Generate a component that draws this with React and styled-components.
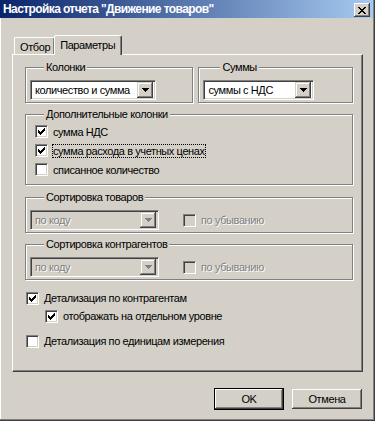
import React from 'react'
import styled, { createGlobalStyle } from 'styled-components'

const GlobalStyle = createGlobalStyle`
  html, body {
    margin: 0;
    padding: 0;
    background: #d4d0c8;
  }
  body {
    font-family: "Liberation Sans", Arial, sans-serif;
    font-size: 11px;
    letter-spacing: -0.4px;
    color: #000;
  }
`

const Window = styled.div`
  width: 375px;
  height: 421px;
  box-sizing: border-box;
  background: #d4d0c8;
  border-right: 1px solid #404040;
  border-bottom: 1px solid #404040;
  box-shadow: inset -1px -1px 0 #808080, inset 1px 0 0 #fff;
  display: flex;
  flex-direction: column;
`

const TitleBar = styled.div`
  height: 18px;
  margin-right: 1px;
  padding: 0 3px 0 3px;
  display: flex;
  align-items: center;
  justify-content: space-between;
  background: linear-gradient(to right, #0a246a, #a6caf0);
`

const Title = styled.span`
  color: #fff;
  font-weight: 700;
  font-size: 12px;
  letter-spacing: -0.6px;
  white-space: nowrap;
`

const CloseButton = styled.div`
  width: 16px;
  height: 14px;
  margin-top: 2px;
  box-sizing: border-box;
  background: #d4d0c8;
  display: flex;
  align-items: center;
  justify-content: center;
  box-shadow: inset -1px -1px 0 #404040, inset 1px 1px 0 #fff, inset -2px -2px 0 #808080;
`

const Body = styled.div`
  flex: 1;
  padding: 17px 0 0 12px;
  display: flex;
  flex-direction: column;
`

const TabRow = styled.div`
  display: flex;
  align-items: flex-end;
  height: 19px;
  padding-left: 2px;
  position: relative;
  z-index: 1;
`

const Tab = styled.div`
  box-sizing: border-box;
  height: ${p => (p.$active ? 20 : 17)}px;
  padding: ${p => (p.$active ? '3px 6px 0 5px' : '3px 4px 0 5px')};
  margin: ${p => (p.$active ? '0 0 -1px -1px' : '0 0 0 0')};
  background: #d4d0c8;
  border-top: 1px solid #fff;
  border-left: 1px solid #fff;
  border-right: 1px solid #404040;
  border-radius: 2px 2px 0 0;
  box-shadow: inset -1px 0 0 #808080;
  white-space: nowrap;
`

const Panel = styled.div`
  width: 351px;
  height: 318px;
  box-sizing: border-box;
  border-top: 1px solid #fff;
  border-left: 1px solid #fff;
  border-right: 1px solid #404040;
  border-bottom: 1px solid #404040;
  box-shadow: inset -1px -1px 0 #808080;
  padding: 6px 9px 0 12px;
  display: flex;
  flex-direction: column;
`

const GroupRow = styled.div`
  display: flex;
  gap: 5px;
`

const Group = styled.fieldset`
  margin: ${p => p.$mt || 0}px 0 0 0;
  padding: ${p => p.$pad || '6px 4px 2px 4px'};
  width: ${p => (p.$w ? `${p.$w}px` : 'auto')};
  box-sizing: border-box;
  border: 1px solid #808080;
  box-shadow: inset 1px 1px 0 #fff, 1px 1px 0 #fff;
  min-width: 0;
`

const Legend = styled.legend`
  margin-left: ${p => p.$ml || 14}px;
  padding: 0 2px;
  line-height: 13px;
  background: #d4d0c8;
`

const ComboRow = styled.div`
  display: flex;
  align-items: center;
`

const Combo = styled.div`
  width: ${p => p.$w}px;
  height: 20px;
  box-sizing: border-box;
  display: flex;
  align-items: center;
  padding: 2px;
  background: ${p => (p.$disabled ? '#d4d0c8' : '#fff')};
  border-top: 1px solid #808080;
  border-left: 1px solid #808080;
  border-right: 1px solid #fff;
  border-bottom: 1px solid #fff;
  box-shadow: inset 1px 1px 0 #404040, inset -1px -1px 0 #d4d0c8;
`

const ComboText = styled.span`
  flex: 1;
  padding-left: 2px;
  white-space: nowrap;
  overflow: hidden;
  color: ${p => (p.$disabled ? '#808080' : '#000')};
  text-shadow: ${p => (p.$disabled ? '1px 1px 0 #fff' : 'none')};
`

const ComboButton = styled.div`
  width: 16px;
  height: 16px;
  box-sizing: border-box;
  flex-shrink: 0;
  background: #d4d0c8;
  display: flex;
  align-items: center;
  justify-content: center;
  box-shadow: inset -1px -1px 0 #404040, inset 1px 1px 0 #d4d0c8, inset -2px -2px 0 #808080, inset 2px 2px 0 #fff;
`

const CheckRow = styled.div`
  display: flex;
  align-items: center;
  height: ${p => p.$h || 19}px;
  margin: ${p => p.$mt || 0}px 0 0 ${p => p.$ml || 0}px;
  gap: 4px;
`

const Box = styled.div`
  width: 13px;
  height: 13px;
  box-sizing: border-box;
  flex-shrink: 0;
  display: flex;
  align-items: center;
  justify-content: center;
  background: ${p => (p.$disabled ? '#d4d0c8' : '#fff')};
  border-top: 1px solid #808080;
  border-left: 1px solid #808080;
  border-right: 1px solid #fff;
  border-bottom: 1px solid #fff;
  box-shadow: inset 1px 1px 0 #404040, inset -1px -1px 0 #d4d0c8;
`

const Label = styled.span`
  white-space: nowrap;
  padding: 1px 1px;
  color: ${p => (p.$disabled ? '#808080' : '#000')};
  text-shadow: ${p => (p.$disabled ? '1px 1px 0 #fff' : 'none')};
  outline: ${p => (p.$focus ? '1px dotted #000' : 'none')};
  outline-offset: -1px;
`

const Footer = styled.div`
  display: flex;
  justify-content: flex-end;
  gap: 7px;
  width: 351px;
  margin-top: 16px;
`

const Button = styled.div`
  width: ${p => p.$w}px;
  height: 22px;
  box-sizing: border-box;
  display: flex;
  align-items: center;
  justify-content: center;
  background: #d4d0c8;
  border: 1px solid ${p => (p.$default ? '#000' : 'transparent')};
  box-shadow: inset -1px -1px 0 #404040, inset 1px 1px 0 #fff, inset -2px -2px 0 #808080;
`

const checkPixels = [
  [6, 0], [5, 1], [6, 1], [0, 2], [4, 2], [5, 2], [6, 2],
  [0, 3], [1, 3], [3, 3], [4, 3], [5, 3],
  [0, 4], [1, 4], [2, 4], [3, 4], [4, 4],
  [1, 5], [2, 5], [3, 5], [2, 6]
]

const CheckMark = () => (
  <svg width="7" height="7" viewBox="0 0 7 7" shapeRendering="crispEdges">
    {checkPixels.map(([x, y]) => <rect key={`${x}-${y}`} x={x} y={y} width="1" height="1" fill="#000" />)}
  </svg>
)

const Arrow = ({ color = '#000' }) => (
  <svg width="7" height="4" viewBox="0 0 7 4" shapeRendering="crispEdges">
    <path d="M0 0h7v1h-1v1h-1v1h-1v1h-1v-1h-1v-1h-1v-1h-1z" fill={color} />
  </svg>
)

const CloseIcon = () => (
  <svg width="8" height="7" viewBox="0 0 8 7" shapeRendering="crispEdges">
    <path d="M0 0h2v1h1v1h2v-1h1v-1h2v1h-1v1h-1v1h-1v1h1v1h1v1h1v1h-2v-1h-1v-1h-2v1h-1v1h-2v-1h1v-1h1v-1h1v-1h-1v-1h-1v-1h-1z" fill="#000" />
  </svg>
)

const Check = ({ checked, disabled, focus, children, ...rest }) => (
  <CheckRow {...rest}>
    <Box $disabled={disabled}>{checked && <CheckMark />}</Box>
    <Label $disabled={disabled} $focus={focus}>{children}</Label>
  </CheckRow>
)

const Select = ({ value, width, disabled }) => (
  <Combo $w={width} $disabled={disabled}>
    <ComboText $disabled={disabled}>{value}</ComboText>
    <ComboButton>
      <Arrow color={disabled ? '#808080' : '#000'} />
    </ComboButton>
  </Combo>
)

const App = () => (
  <>
    <GlobalStyle />
    <Window>
      <TitleBar>
        <Title>Настройка отчета "Движение товаров"</Title>
        <CloseButton><CloseIcon /></CloseButton>
      </TitleBar>
      <Body>
        <TabRow>
          <Tab>Отбор</Tab>
          <Tab $active>Параметры</Tab>
        </TabRow>
        <Panel>
          <GroupRow>
            <Group $w={169}>
              <Legend>Колонки</Legend>
              <Select value="количество и сумма" width={126} />
            </Group>
            <Group $w={155}>
              <Legend $ml={17}>Суммы</Legend>
              <Select value="суммы с НДС" width={111} />
            </Group>
          </GroupRow>
          <Group $mt={5} $pad="1px 9px 5px 9px">
            <Legend $ml={9}>Дополнительные колонки</Legend>
            <Check checked>сумма НДС</Check>
            <Check checked focus>сумма расхода в учетных ценах</Check>
            <Check>списанное количество</Check>
          </Group>
          <Group $mt={6}>
            <Legend>Сортировка товаров</Legend>
            <ComboRow>
              <Select value="по коду" width={129} disabled />
              <Check disabled $ml={24} $h={20}>по убыванию</Check>
            </ComboRow>
          </Group>
          <Group $mt={5}>
            <Legend>Сортировка контрагентов</Legend>
            <ComboRow>
              <Select value="по коду" width={129} disabled />
              <Check disabled $ml={24} $h={20}>по убыванию</Check>
            </ComboRow>
          </Group>
          <Check checked $mt={9} $ml={1} $h={18}>Детализация по контрагентам</Check>
          <Check checked $ml={20} $h={18}>отображать на отдельном уровне</Check>
          <Check $mt={7} $ml={1} $h={18}>Детализация по единицам измерения</Check>
        </Panel>
        <Footer>
          <Button $w={70} $default>OK</Button>
          <Button $w={72}>Отмена</Button>
        </Footer>
      </Body>
    </Window>
  </>
)

export default App
